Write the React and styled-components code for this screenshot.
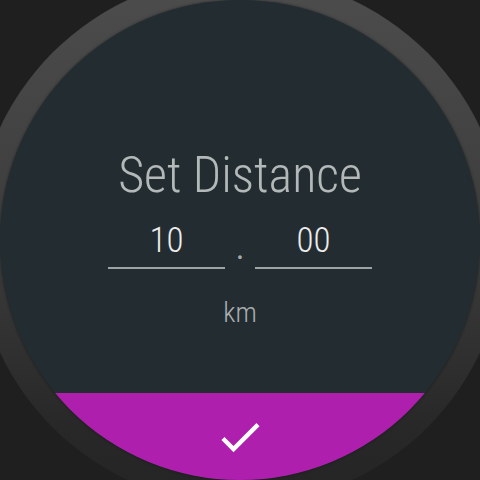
import React from 'react';
import styled, { createGlobalStyle } from 'styled-components';

const GlobalStyle = createGlobalStyle`
    html, body {
        margin: 0;
        padding: 0;
        background: #1f1f1f;
    }
    body {
        font-family: Roboto, "Noto Sans", sans-serif;
    }
`;

const Page = styled.div`
    width: 480px;
    height: 480px;
    overflow: hidden;
    display: flex;
    align-items: center;
    justify-content: center;
`;

// watch bezel, lighter at the top and fading into the background at the bottom
const Bezel = styled.div`
    flex: none;
    width: 530px;
    height: 530px;
    border-radius: 50%;
    background: linear-gradient(#4d4d4d 0%, #3c3c3c 50%, #282828 85%, #242424 100%);
    display: flex;
    align-items: center;
    justify-content: center;
`;

const Screen = styled.div`
    width: 480px;
    height: 480px;
    border-radius: 50%;
    overflow: hidden;
    background: #232d31;
    box-shadow: 0 0 3px rgba(0, 0, 0, 0.45);
    display: flex;
    flex-direction: column;
    align-items: center;
`;

const Body = styled.div`
    flex: 1;
    padding-top: 145px;
    display: flex;
    flex-direction: column;
    align-items: center;
`;

const Title = styled.h1`
    margin: 0;
    font-size: 50px;
    line-height: 60px;
    font-weight: 300;
    font-stretch: condensed;
    color: #b3b8b9;
`;

const NumberRow = styled.div`
    margin-top: 10px;
    display: flex;
    align-items: flex-end;
`;

const Field = styled.div`
    width: 117px;
    line-height: 52px;
    font-size: 35px;
    font-weight: 300;
    font-stretch: condensed;
    text-align: center;
    color: #ececec;
    border-bottom: 2px solid #9ea4a6;
`;

const Dot = styled.span`
    width: 30px;
    text-align: center;
    font-size: 33px;
    line-height: 43px;
    color: #a4aaac;
`;

const Unit = styled.div`
    margin-top: 28px;
    font-size: 28px;
    line-height: 32px;
    font-weight: 300;
    font-stretch: condensed;
    color: #a9aeb0;
`;

const ConfirmBar = styled.button`
    flex: none;
    width: 100%;
    height: 87px;
    border: none;
    padding: 0;
    background: #af1fae;
    display: flex;
    align-items: center;
    justify-content: center;
    cursor: pointer;
`;

const CheckIcon = () => (
    <svg width="52" height="52" viewBox="0 0 24 24" fill="#ffffff">
        <path d="M9 16.17L4.83 12l-1.42 1.41L9 19 21 7l-1.41-1.41z" />
    </svg>
);

const App = () => {
    return (
        <Page>
            <GlobalStyle />
            <Bezel>
                <Screen>
                    <Body>
                        <Title>Set Distance</Title>
                        <NumberRow>
                            <Field>10</Field>
                            <Dot>.</Dot>
                            <Field>00</Field>
                        </NumberRow>
                        <Unit>km</Unit>
                    </Body>
                    <ConfirmBar>
                        <CheckIcon />
                    </ConfirmBar>
                </Screen>
            </Bezel>
        </Page>
    );
};

export default App;
